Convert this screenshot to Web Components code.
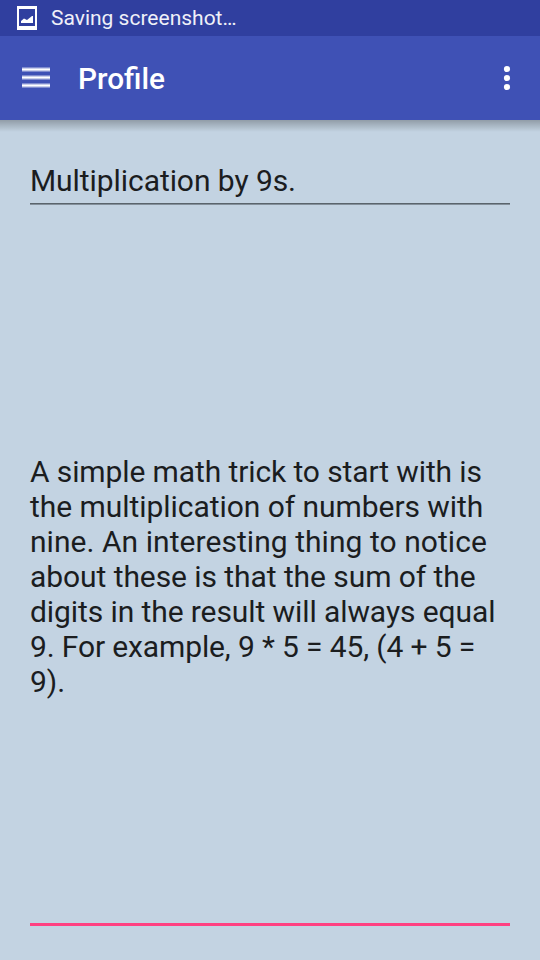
<!DOCTYPE html>
<html lang="en"><head><meta charset="utf-8"><title>Profile</title>
<style>html,body{margin:0;height:100%}body{font-family:Roboto,"Noto Sans",sans-serif;overflow:hidden}</style></head>
<body>
<app-screen>
<status-bar slot="top">Saving screenshot…</status-bar>
<tool-bar slot="top">Profile</tool-bar>
<title-field>Multiplication by 9s.</title-field>
<body-field>
<text-line style="letter-spacing:-.11px">A simple math trick to start with is</text-line>
<text-line style="letter-spacing:-.05px">the multiplication of numbers with</text-line>
<text-line style="letter-spacing:.05px">nine. An interesting thing to notice</text-line>
<text-line style="letter-spacing:-.07px">about these is that the sum of the</text-line>
<text-line style="letter-spacing:-.09px">digits in the result will always equal</text-line>
<text-line style="letter-spacing:-.13px">9. For example, 9 * 5 = 45, (4 + 5 =</text-line>
<text-line>9).</text-line>
</body-field>
</app-screen>
<script>
const define=(name,html)=>customElements.define(name,class extends HTMLElement{
  constructor(){super();this.attachShadow({mode:'open'}).innerHTML=html;}
});
define('app-screen',`<style>
:host{display:flex;flex-direction:column;width:540px;height:960px;background:#c3d3e2}
header{position:relative;z-index:1}
header::after{content:"";position:absolute;left:0;right:0;top:100%;height:12px;background:linear-gradient(rgba(0,0,0,.26),rgba(0,0,0,.14) 45%,transparent)}
main{flex:1;display:flex;flex-direction:column;padding:39px 30px 34px}
</style><header><slot name="top"></slot></header><main><slot></slot></main>`);
define('status-bar',`<style>
:host{display:flex;align-items:center;height:36px;box-sizing:border-box;padding-left:17px;gap:14px;background:#303f9f;color:#eff0f8;font-size:21px}
svg{display:block}
</style><svg width="20" height="24" viewBox="0 0 20 24"><path d="M0 0h20v24H0zM2 3v17h16V3z" fill="#fff" fill-rule="evenodd"/><path d="M4 17v-2l3-2.5 3 1.5 5-4h1v7z" fill="#fff"/></svg><span><slot></slot></span>`);
define('tool-bar',`<style>
:host{display:flex;align-items:center;height:84px;box-sizing:border-box;padding:0 27px 0 22px;background:#3f51b5;color:#fff;font-size:29.8px;font-weight:500}
span{flex:1;padding-left:28px}svg{display:block}
</style><svg width="28" height="22" viewBox="0 0 28 22"><path d="M0 2.5h28M0 10.5h28M0 18.5h28" stroke="#fff" stroke-opacity=".45" stroke-width="4.6"/><path d="M0 2.5h28M0 10.5h28M0 18.5h28" stroke="#fff" stroke-width="2"/></svg><span><slot></slot></span>
<svg width="12" height="26" viewBox="0 0 12 26" fill="#fff"><circle cx="6" cy="4" r="3.1"/><circle cx="6" cy="13" r="3.1"/><circle cx="6" cy="22" r="3.1"/></svg>`);
define('title-field',`<style>
:host{display:block;height:46px;box-sizing:border-box;padding-top:4px;color:#1b1d1f;font-size:30px;line-height:35px;letter-spacing:-.07px;border-bottom:1px solid #84909b}
div{height:40px;border-bottom:1px solid #5a646c}
</style><div><slot></slot></div>`);
define('body-field',`<style>
:host{flex:1;display:flex;flex-direction:column;justify-content:center;border-bottom:3px solid #ff4081;color:#1b1d1f;font-size:30px;line-height:35px;padding-top:25px}
</style><slot></slot>`);
define('text-line',`<style>:host{display:block;white-space:nowrap}</style><slot></slot>`);
</script></body></html>
